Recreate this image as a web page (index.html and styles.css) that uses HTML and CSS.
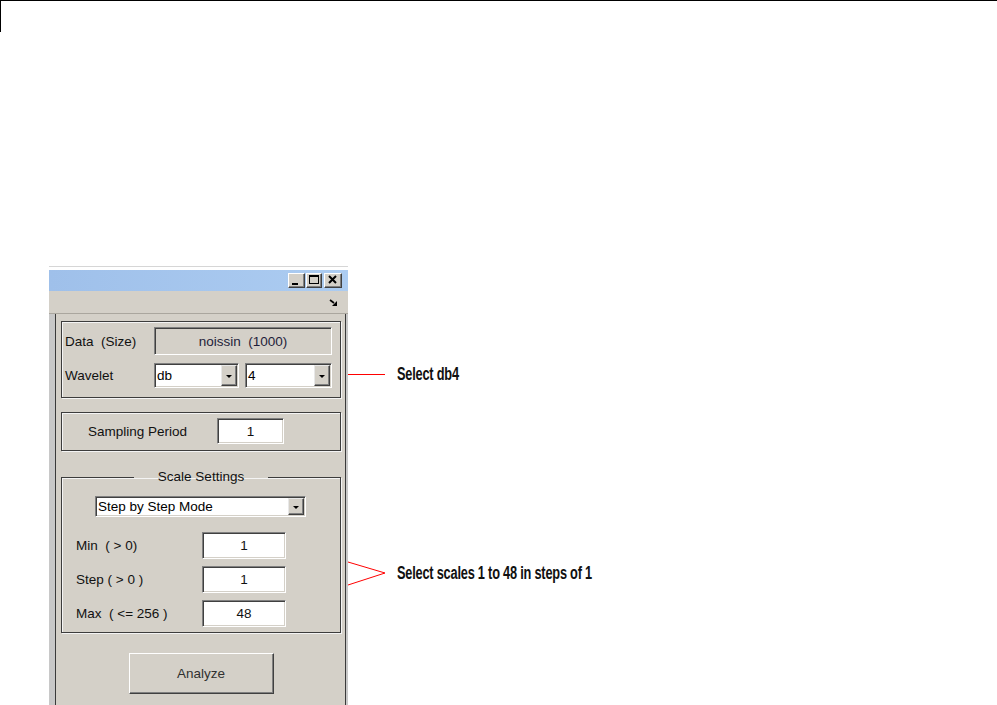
FILE: index.html
```html
<!DOCTYPE html>
<html lang="en">
<head>
    <meta charset="UTF-8">
    <title>Wavelet 1-D Continuous - Settings</title>
    <link rel="stylesheet" href="styles.css">
</head>
<body>
    <div class="page">
        <div class="crop-mark"></div>

        <div class="figure">
            <div class="window">
                <!-- Title bar -->
                <div class="titlebar">
                    <span class="tb-btn tb-min">
                        <svg viewBox="0 0 15 13" width="15" height="13"><rect x="3" y="9" width="6" height="2" fill="#000"/></svg>
                    </span>
                    <span class="tb-btn tb-max">
                        <svg viewBox="0 0 14 13" width="14" height="13"><rect x="2.5" y="1.5" width="9" height="8" fill="none" stroke="#000"/><rect x="2" y="1" width="10" height="2" fill="#000"/></svg>
                    </span>
                    <span class="tb-btn tb-close">
                        <svg viewBox="0 0 16 13" width="16" height="13"><path d="M4 2 L11 9 M11 2 L4 9" stroke="#000" stroke-width="2"/></svg>
                    </span>
                </div>

                <div class="toolbar">
                    <svg viewBox="0 0 9 7" width="9" height="7"><path d="M1 1 L5 4" stroke="#000" stroke-width="1.6"/><polygon points="8,2 8,7 3,7" fill="#000"/></svg>
                </div>

                <div class="panel-wrap">
                    <div class="panel">
                        <!-- Data / Wavelet -->
                        <div class="frame frame-data">
                            <span class="label">Data  (Size)</span>
                            <div class="readout">noissin  (1000)</div>
                            <span class="label">Wavelet</span>
                            <div class="combo-pair">
                                <div class="combo combo-family"><span class="combo-text">db</span><span class="drop"><i></i></span></div>
                                <div class="combo combo-order"><span class="combo-text">4</span><span class="drop"><i></i></span></div>
                            </div>
                        </div>

                        <!-- Sampling period -->
                        <div class="frame frame-sampling">
                            <span class="label sampling-label">Sampling Period</span>
                            <div class="edit edit-sampling">1</div>
                        </div>

                        <!-- Scale settings -->
                        <fieldset class="frame frame-scales">
                            <legend>Scale Settings</legend>
                            <div class="combo combo-mode"><span class="combo-text">Step by Step Mode</span><span class="drop"><i></i></span></div>
                            <div class="scale-rows">
                                <span class="label">Min  ( &gt; 0)</span>
                                <div class="edit">1</div>
                                <span class="label">Step ( &gt; 0 )</span>
                                <div class="edit">1</div>
                                <span class="label">Max  ( &lt;= 256 )</span>
                                <div class="edit">48</div>
                            </div>
                        </fieldset>

                        <button class="push-btn">Analyze</button>
                    </div>
                </div>
            </div>

            <!-- Callouts -->
            <div class="callout callout-db4">
                <svg viewBox="0 0 37 16" width="37" height="16"><line x1="0" y1="8.5" x2="37" y2="8.5" stroke="#ff0000" stroke-width="1"/></svg>
                <span class="callout-text">Select db4</span>
            </div>
            <div class="callout callout-scales">
                <svg viewBox="0 0 37 26" width="37" height="26"><path d="M0 2 L37 13 L0 25" fill="none" stroke="#ff0000" stroke-width="1"/></svg>
                <span class="callout-text">Select scales 1 to 48 in steps of 1</span>
            </div>
        </div>
    </div>
</body>
</html>
```

FILE: styles.css
```css
/* styles.css */
body {
    margin: 0;
    background: #fff;
    font-family: "Liberation Sans", Arial, sans-serif;
    font-size: 13.5px;
    color: #000;
}

.page {
    height: 705px;
    overflow: hidden;
}

.crop-mark {
    height: 31px;
    border-top: 1px solid #000;
    border-left: 1px solid #000;
}

.figure {
    position: relative;
    width: 299px;
    margin: 234px 0 0 49px;
}

.window {
    width: 299px;
    border-top: 1px solid #d6d6d6;
}

/* title bar */
.titlebar {
    margin-top: 3px;
    height: 21px;
    box-sizing: border-box;
    padding: 3px 6px 0 0;
    display: flex;
    justify-content: flex-end;
    align-items: flex-start;
    gap: 1px;
    background: linear-gradient(to right, #9fc0ea, #acccf1);
}

.tb-btn {
    display: flex;
    height: 15px;
    box-sizing: border-box;
    background: #d4d0c8;
    border: 1px solid;
    border-color: #fff #404040 #404040 #fff;
    box-shadow: inset -1px -1px 0 #808080;
}

.tb-min { width: 17px; }
.tb-max { width: 16px; }
.tb-close { width: 18px; margin-left: 1px; }

.toolbar {
    height: 22px;
    background: #d4d0c8;
    border-bottom: 1px solid #aaa69e;
    display: flex;
    justify-content: flex-end;
    align-items: center;
    padding-right: 10px;
}

/* main panel */
.panel-wrap {
    height: 400px;
    background: #c8c8c8;
    padding: 0 2px 0 6px;
}

.panel {
    height: 100%;
    box-sizing: border-box;
    background: #d4d0c8;
    border-left: 1px solid #3a3a3a;
    border-right: 1px solid #3a3a3a;
    padding: 7px 4px 0 5px;
    display: flex;
    flex-direction: column;
}

.label {
    white-space: pre;
    color: #111;
}

.frame {
    border: 1px solid #3c3c3c;
    box-shadow: inset 1px 1px 0 #f4f4f4, 1px 1px 0 #f4f4f4;
}

.frame-data {
    display: grid;
    grid-template-columns: 89px 1fr;
    grid-template-rows: 28px 25px;
    row-gap: 8px;
    align-items: center;
    padding: 5px 8px 9px 3px;
}

.readout {
    height: 28px;
    box-sizing: border-box;
    display: flex;
    align-items: center;
    justify-content: center;
    white-space: pre;
    color: #1e1e3a;
    border: 1px solid;
    border-color: #808080 #fff #fff #808080;
    box-shadow: inset 1px 1px 0 #404040, inset -1px -1px 0 #d4d0c8;
}

.combo-pair {
    display: flex;
    gap: 6px;
}

.combo {
    height: 25px;
    box-sizing: border-box;
    display: flex;
    background: #fff;
    border: 1px solid;
    border-color: #808080 #fff #fff #808080;
    box-shadow: inset 1px 1px 0 #404040, inset -1px -1px 0 #d4d0c8;
    padding: 1px;
}

.combo-family { width: 85px; }
.combo-order { flex: 1; }

.combo-text {
    flex: 1;
    display: flex;
    align-items: center;
    padding-left: 1px;
}

.drop {
    width: 16px;
    box-sizing: border-box;
    display: flex;
    align-items: center;
    justify-content: center;
    background: #d4d0c8;
    border: 1px solid;
    border-color: #e8e8e8 #404040 #404040 #e8e8e8;
    box-shadow: inset -1px -1px 0 #808080;
}

.drop i {
    width: 0;
    height: 0;
    border-left: 3px solid transparent;
    border-right: 3px solid transparent;
    border-top: 3px solid #000;
    margin-top: 1px;
}

.edit {
    height: 27px;
    width: 84px;
    box-sizing: border-box;
    display: flex;
    align-items: center;
    justify-content: center;
    background: #fff;
    color: #111;
    border: 1px solid;
    border-color: #808080 #fff #fff #808080;
    box-shadow: inset 1px 1px 0 #404040, inset -1px -1px 0 #d4d0c8;
}

.frame-sampling {
    margin-top: 14px;
    display: flex;
    align-items: center;
    padding: 5px 0 6px 26px;
}

.sampling-label {
    width: 129px;
}

.edit-sampling {
    width: 67px;
    height: 26px;
}

.frame-scales {
    margin: 18px 0 0 0;
    padding: 11px 0 5px 0;
    min-width: 0;
}

.frame-scales legend {
    margin: 0 auto;
    padding: 0 24px;
    line-height: 16px;
    color: #111;
}

.combo-mode {
    width: 211px;
    height: 21px;
    margin-left: 33px;
}

.scale-rows {
    display: grid;
    grid-template-columns: 126px 84px;
    row-gap: 7px;
    align-items: center;
    padding-left: 14px;
    margin-top: 15px;
}

.push-btn {
    align-self: center;
    margin-top: 20px;
    width: 145px;
    height: 41px;
    font-family: inherit;
    font-size: 13.5px;
    color: #303030;
    background: #d4d0c8;
    border: 1px solid;
    border-color: #fff #404040 #404040 #fff;
    box-shadow: inset -1px -1px 0 #808080;
    padding: 0;
}

/* annotation callouts */
.callout {
    position: absolute;
    left: 299px;
    display: flex;
    align-items: center;
    white-space: nowrap;
}

.callout svg {
    display: block;
    flex: none;
}

.callout-db4 {
    top: 100px;
    height: 16px;
}

.callout-scales {
    top: 294px;
    height: 26px;
}

.callout-text {
    margin-left: 12px;
    font-family: "Liberation Sans", Arial, sans-serif;
    font-weight: bold;
    font-size: 18px;
    letter-spacing: -0.3px;
    color: #111;
    transform: scaleX(0.71);
    transform-origin: left center;
}
```
